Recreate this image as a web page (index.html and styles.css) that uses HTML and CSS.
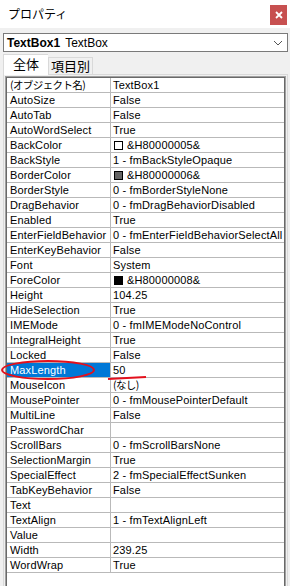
FILE: index.html
```html
<!DOCTYPE html>
<html lang="ja">
<head>
    <meta charset="UTF-8">
    <meta name="viewport" content="width=device-width, initial-scale=1.0">
    <title>プロパティ</title>
    <link rel="stylesheet" href="styles.css">
</head>
<body>

    <div class="titlebar">
        <span class="title">プロパティ</span>
        <span class="close">
            <svg width="8" height="8" viewBox="0 0 8 8"><path d="M1 1 L7 7 M7 1 L1 7" stroke="#fff" stroke-width="1.8" fill="none"/></svg>
        </span>
    </div>

    <div class="objsel">
        <span class="objname">TextBox1</span>
        <span class="objtype">TextBox</span>
        <svg class="chevron" width="10" height="6" viewBox="0 0 10 6"><polyline points="1,1 5,5 9,1" stroke="#555" stroke-width="1" fill="none"/></svg>
    </div>

    <div class="tabs">
        <div class="tab active">全体</div>
        <div class="tab">項目別</div>
    </div>

    <div class="page">
        <div class="grid">
            <div class="rows">
                <div class="row"><div class="name"><span class="jp">(オブジェクト名)</span></div><div class="value">TextBox1</div></div>
                <div class="row"><div class="name">AutoSize</div><div class="value">False</div></div>
                <div class="row"><div class="name">AutoTab</div><div class="value">False</div></div>
                <div class="row"><div class="name">AutoWordSelect</div><div class="value">True</div></div>
                <div class="row"><div class="name">BackColor</div><div class="value"><span class="swatch white"></span>&amp;H80000005&amp;</div></div>
                <div class="row"><div class="name">BackStyle</div><div class="value">1 - fmBackStyleOpaque</div></div>
                <div class="row"><div class="name">BorderColor</div><div class="value"><span class="swatch gray"></span>&amp;H80000006&amp;</div></div>
                <div class="row"><div class="name">BorderStyle</div><div class="value">0 - fmBorderStyleNone</div></div>
                <div class="row"><div class="name">DragBehavior</div><div class="value">0 - fmDragBehaviorDisabled</div></div>
                <div class="row"><div class="name">Enabled</div><div class="value">True</div></div>
                <div class="row"><div class="name">EnterFieldBehavior</div><div class="value">0 - fmEnterFieldBehaviorSelectAll</div></div>
                <div class="row"><div class="name">EnterKeyBehavior</div><div class="value">False</div></div>
                <div class="row"><div class="name">Font</div><div class="value">System</div></div>
                <div class="row"><div class="name">ForeColor</div><div class="value"><span class="swatch black"></span>&amp;H80000008&amp;</div></div>
                <div class="row"><div class="name">Height</div><div class="value">104.25</div></div>
                <div class="row"><div class="name">HideSelection</div><div class="value">True</div></div>
                <div class="row"><div class="name">IMEMode</div><div class="value">0 - fmIMEModeNoControl</div></div>
                <div class="row"><div class="name">IntegralHeight</div><div class="value">True</div></div>
                <div class="row"><div class="name">Locked</div><div class="value">False</div></div>
                <div class="row"><div class="name selected">MaxLength</div><div class="value">50</div></div>
                <div class="row"><div class="name">MouseIcon</div><div class="value"><span class="jp">(なし)</span></div></div>
                <div class="row"><div class="name">MousePointer</div><div class="value">0 - fmMousePointerDefault</div></div>
                <div class="row"><div class="name">MultiLine</div><div class="value">False</div></div>
                <div class="row"><div class="name">PasswordChar</div><div class="value"></div></div>
                <div class="row"><div class="name">ScrollBars</div><div class="value">0 - fmScrollBarsNone</div></div>
                <div class="row"><div class="name">SelectionMargin</div><div class="value">True</div></div>
                <div class="row"><div class="name">SpecialEffect</div><div class="value">2 - fmSpecialEffectSunken</div></div>
                <div class="row"><div class="name">TabKeyBehavior</div><div class="value">False</div></div>
                <div class="row"><div class="name">Text</div><div class="value"></div></div>
                <div class="row"><div class="name">TextAlign</div><div class="value">1 - fmTextAlignLeft</div></div>
                <div class="row"><div class="name">Value</div><div class="value"></div></div>
                <div class="row"><div class="name">Width</div><div class="value">239.25</div></div>
                <div class="row"><div class="name">WordWrap</div><div class="value">True</div></div>
            </div>
        </div>
    </div>

    <!-- red marks drawn over the screenshot -->
    <svg class="marks" width="290" height="586" viewBox="0 0 290 586">
        <ellipse cx="48" cy="370" rx="46" ry="9" stroke="#e3101c" stroke-width="2" fill="none"/>
        <path d="M108 379 Q126 378 146 377" stroke="#e3101c" stroke-width="2" fill="none"/>
    </svg>

</body>
</html>
```

FILE: styles.css
```css
body {
    font-family: "Liberation Sans", "Noto Sans CJK JP", sans-serif;
    background-color: #f0f0f0;
    margin: 0;
    width: 290px;
    height: 586px;
    overflow: hidden;
    display: flex;
    flex-direction: column;
    position: relative;
}
.titlebar {
    height: 28px;
    background-color: #fff;
    display: flex;
    align-items: center;
    justify-content: space-between;
    padding: 0 3px 0 8px;
    box-sizing: border-box;
    flex-shrink: 0;
}
.title {
    font-family: "Noto Sans CJK JP", sans-serif;
    font-size: 12px;
    color: #000;
    margin-top: -2px;
}
.close {
    width: 17px;
    height: 20px;
    background-color: #c75050;
    display: flex;
    align-items: center;
    justify-content: center;
    margin-top: 1px;
}
.objsel {
    margin: 5px 2px 0 3px;
    height: 19px;
    border: 1px solid #7a7a7a;
    background-color: #fff;
    box-sizing: border-box;
    display: flex;
    align-items: center;
    padding: 0 4px 0 3px;
    font-size: 12px;
    flex-shrink: 0;
}
.objname {
    font-weight: bold;
    margin-right: 5px;
}
.objtype {
    flex: 1;
}
.chevron {
    margin-top: 1px;
}
.tabs {
    display: flex;
    align-items: flex-end;
    height: 22px;
    margin-left: 3px;
    flex-shrink: 0;
}
.tab {
    font-family: "Noto Sans CJK JP", sans-serif;
    font-size: 13px;
    height: 17px;
    line-height: 16px;
    width: 45px;
    flex-shrink: 0;
    box-sizing: border-box;
    border: 1px solid #d9d9d9;
    border-bottom: none;
    background-color: #f0f0f0;
    text-align: center;
    white-space: nowrap;
}
.tab.active {
    height: 21px;
    line-height: 18px;
    background-color: #fff;
    margin-bottom: -1px;
    position: relative;
    z-index: 1;
    border-right: none;
}
.page {
    flex: 1;
    margin: 0 2px 0 3px;
    border: 1px solid #d9d9d9;
    border-bottom: none;
    padding: 1px 1px 0 1px;
    background-color: #f0f0f0;
    display: flex;
}
.grid {
    flex: 1;
    border: 1px solid #a0a0a0;
    border-bottom: none;
    display: flex;
}
.rows {
    flex: 1;
    border: 1px solid #696969;
    border-bottom: none;
    background-color: #fff;
}
.row {
    display: grid;
    grid-template-columns: 104px 1fr;
    height: 15px;
    font-size: 11px;
    line-height: 14px;
    letter-spacing: 0.15px;
    color: #000;
}
.name,
.value {
    border-bottom: 1px solid #b9b9b9;
    white-space: nowrap;
    overflow: hidden;
}
.name {
    border-right: 1px solid #b9b9b9;
    padding-left: 3px;
}
.name.selected {
    background-color: #0078d7;
    color: #fff;
}
.value {
    padding-left: 2px;
}
.jp {
    font-family: "Noto Sans CJK JP", sans-serif;
    font-size: 10.5px;
    letter-spacing: -0.6px;
}
.swatch {
    display: inline-block;
    width: 9px;
    height: 9px;
    border: 1px solid #000;
    margin: 0 4px 0 1px;
    vertical-align: -1px;
    box-sizing: border-box;
}
.swatch.white {
    background-color: #fff;
}
.swatch.gray {
    background-color: #646464;
}
.swatch.black {
    background-color: #000;
}
.marks {
    position: absolute;
    top: 0;
    left: 0;
    pointer-events: none;
}
```
